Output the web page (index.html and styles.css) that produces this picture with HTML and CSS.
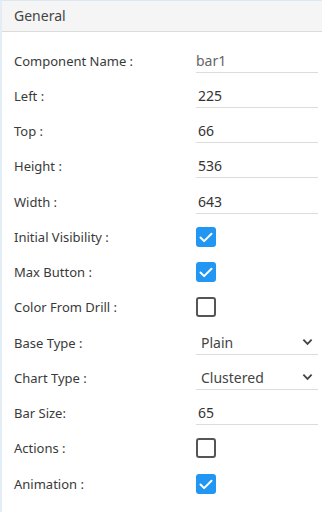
FILE: index.html
```html
<!DOCTYPE html>
<html lang="en">

<head>
    <meta charset="UTF-8">
    <meta name="viewport" content="width=device-width, initial-scale=1.0">
    <title>General</title>
    <link rel="stylesheet" href="styles.css">
</head>

<body>
    <div class="panel">
        <div class="panel-head">General</div>
        <div class="panel-body">
            <div class="row">
                <label>Component Name :</label>
                <input type="text" class="field light" value="bar1" />
            </div>
            <div class="row">
                <label>Left :</label>
                <input type="text" class="field" value="225" />
            </div>
            <div class="row">
                <label>Top :</label>
                <input type="text" class="field" value="66" />
            </div>
            <div class="row">
                <label>Height :</label>
                <input type="text" class="field" value="536" />
            </div>
            <div class="row">
                <label>Width :</label>
                <input type="text" class="field" value="643" />
            </div>
            <div class="row">
                <label>Initial Visibility :</label>
                <span class="check on"><svg viewBox="0 0 20 20"><path d="M4.5 10.5l3.6 3.6 7.4-7.4" /></svg></span>
            </div>
            <div class="row">
                <label>Max Button :</label>
                <span class="check on"><svg viewBox="0 0 20 20"><path d="M4.5 10.5l3.6 3.6 7.4-7.4" /></svg></span>
            </div>
            <div class="row">
                <label>Color From Drill :</label>
                <span class="check"></span>
            </div>
            <div class="row">
                <label>Base Type :</label>
                <div class="select">
                    <span>Plain</span>
                    <svg viewBox="0 0 12 8"><path d="M1.5 1.5l4.5 4.5 4.5-4.5" /></svg>
                </div>
            </div>
            <div class="row">
                <label>Chart Type :</label>
                <div class="select">
                    <span>Clustered</span>
                    <svg viewBox="0 0 12 8"><path d="M1.5 1.5l4.5 4.5 4.5-4.5" /></svg>
                </div>
            </div>
            <div class="row">
                <label>Bar Size:</label>
                <input type="text" class="field" value="65" />
            </div>
            <div class="row">
                <label>Actions :</label>
                <span class="check"></span>
            </div>
            <div class="row">
                <label>Animation :</label>
                <span class="check on"><svg viewBox="0 0 20 20"><path d="M4.5 10.5l3.6 3.6 7.4-7.4" /></svg></span>
            </div>
        </div>
    </div>
</body>

</html>
```

FILE: styles.css
```css
body{
    margin: 0;
    background-color: #fff;
    font-family: "Noto Sans", "Open Sans", sans-serif;
    color: #3a3a3a;
}
.panel{
    width: 322px;
    height: 512px;
    box-sizing: border-box;
    border-top: 1px solid #dbe8f2;
    border-left: 2px solid #e2edf5;
    background-color: #fff;
}
.panel-head{
    height: 31px;
    box-sizing: border-box;
    padding: 5px 0 0 12px;
    background-color: #f5f5f5;
    border-bottom: 1px solid #dcdcdc;
    font-size: 14px;
    color: #444;
}
.panel-body{
    padding-top: 11px;
}
.row{
    display: flex;
    align-items: center;
    height: 35.25px;
    padding-left: 12px;
}
.row label{
    width: 182px;
    font-size: 13px;
    color: #3a3a3a;
}
.field{
    width: 122px;
    height: 24px;
    box-sizing: border-box;
    border: none;
    border-bottom: 1px solid #dcdcdc;
    padding: 0 0 0 2px;
    margin: 0;
    margin-top: 0;
    font-family: inherit;
    font-size: 14px;
    color: #333;
    background: transparent;
    outline: none;
}
.field.light{
    color: #666;
    padding-left: 0;
}
.check{
    width: 20px;
    height: 20px;
    box-sizing: border-box;
    border: 2px solid #555;
    border-radius: 3px;
    display: inline-block;
}
.check.on{
    border: none;
    background-color: #2196f3;
}
.check svg{
    width: 20px;
    height: 20px;
    display: block;
}
.check path{
    fill: none;
    stroke: #fff;
    stroke-width: 2;
    stroke-linecap: round;
    stroke-linejoin: round;
}
.select{
    width: 122px;
    height: 24px;
    box-sizing: border-box;
    border-bottom: 1px solid #dcdcdc;
    display: flex;
    align-items: center;
    justify-content: space-between;
    padding: 0 5px 0 5px;
    font-size: 14px;
    color: #444;
}
.select svg{
    width: 11px;
    height: 8px;
}
.select path{
    fill: none;
    stroke: #444;
    stroke-width: 2;
}
```
